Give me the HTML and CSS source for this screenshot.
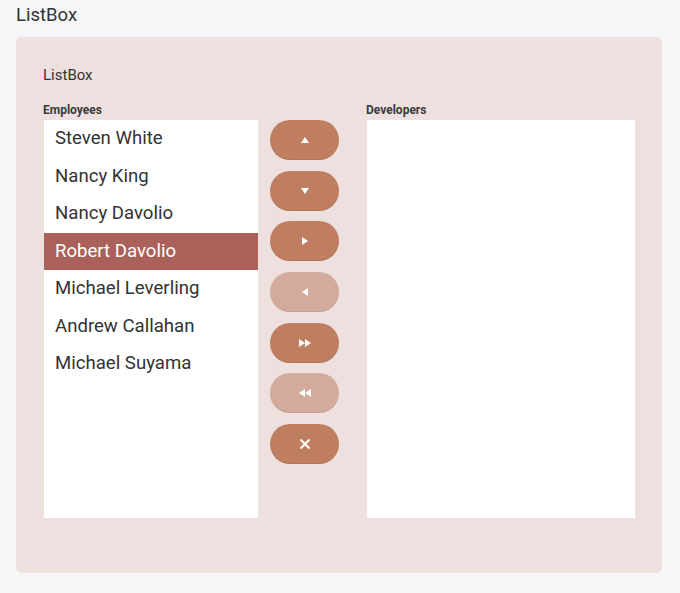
FILE: index.html
```html
<!DOCTYPE html>
<html lang="en">
  <head>
    <meta charset="UTF-8" />
    <title>ListBox</title>
    <link rel="stylesheet" href="styles.css">
  </head>
  <body>
    <h1 class="page-title">ListBox</h1>

    <section class="card">
      <h2 class="card-title">ListBox</h2>

      <div class="dual">
        <div class="list-col list-left">
          <div class="list-label">Employees</div>
          <ul class="listbox">
            <li>Steven White</li>
            <li>Nancy King</li>
            <li>Nancy Davolio</li>
            <li class="selected">Robert Davolio</li>
            <li>Michael Leverling</li>
            <li>Andrew Callahan</li>
            <li>Michael Suyama</li>
          </ul>
        </div>

        <div class="tools">
          <button class="tool-btn" title="Move up">
            <svg width="10" height="10" viewBox="0 0 10 10"><path d="M5 2 L9 8 L1 8 Z" fill="#fff"/></svg>
          </button>
          <button class="tool-btn" title="Move down">
            <svg width="10" height="10" viewBox="0 0 10 10"><path d="M1 2 L9 2 L5 8 Z" fill="#fff"/></svg>
          </button>
          <button class="tool-btn" title="Move to">
            <svg width="10" height="10" viewBox="0 0 10 10"><path d="M2 1 L8 5 L2 9 Z" fill="#fff"/></svg>
          </button>
          <button class="tool-btn disabled" title="Move from">
            <svg width="10" height="10" viewBox="0 0 10 10"><path d="M8 1 L2 5 L8 9 Z" fill="#fff"/></svg>
          </button>
          <button class="tool-btn" title="Move all to">
            <svg width="14" height="10" viewBox="0 0 14 10"><path d="M1 1 L7 5 L1 9 Z M7 1 L13 5 L7 9 Z" fill="#fff"/></svg>
          </button>
          <button class="tool-btn disabled" title="Move all from">
            <svg width="14" height="10" viewBox="0 0 14 10"><path d="M7 1 L1 5 L7 9 Z M13 1 L7 5 L13 9 Z" fill="#fff"/></svg>
          </button>
          <button class="tool-btn" title="Remove">
            <svg width="12" height="12" viewBox="0 0 12 12"><path d="M1.5 1.5 L10.5 10.5 M10.5 1.5 L1.5 10.5" stroke="#fff" stroke-width="2"/></svg>
          </button>
        </div>

        <div class="list-col list-right">
          <div class="list-label">Developers</div>
          <ul class="listbox"></ul>
        </div>
      </div>
    </section>
  </body>
</html>
```

FILE: styles.css
```css
body {
  font-family: Roboto, "Noto Sans", sans-serif;
  margin: 0;
  padding: 0 18px 20px 16px;
  background-color: #f6f6f6;
  color: #333;
}

.page-title {
  font-size: 18.5px;
  font-weight: 400;
  margin: 0;
  padding-top: 4px;
  line-height: 22px;
  height: 33px;
  color: #333;
}

.card {
  background-color: #ede0df;
  border-radius: 6px;
  padding: 28px 27px 55px 27px;
}

.card-title {
  font-size: 15px;
  font-weight: 400;
  margin: 0 0 19px 0;
  line-height: 20px;
  color: #333;
}

.dual {
  display: flex;
  align-items: flex-start;
}

.list-col {
  display: flex;
  flex-direction: column;
}

.list-left {
  width: 215px;
}

.list-right {
  width: 269px;
}

.list-label {
  font-size: 12px;
  font-weight: 700;
  line-height: 13px;
  margin-bottom: 3px;
  color: #3a3a3a;
}

.listbox {
  list-style: none;
  margin: 0 0 0 1px;
  padding: 0;
  height: 398px;
  background-color: #fff;
}

.listbox li {
  height: 37.5px;
  line-height: 36px;
  padding-left: 11px;
  font-size: 18.6px;
  color: #333;
}

.listbox li.selected {
  background-color: #a9615a;
  color: #fff;
}

.tools {
  display: flex;
  flex-direction: column;
  gap: 10.7px;
  margin: 16px 27px 0 12px;
}

.tool-btn {
  width: 69px;
  height: 40px;
  border: none;
  border-radius: 20px;
  background-color: #c07e61;
  box-shadow: inset 0 -1px 0 rgba(0, 0, 0, 0.08);
  display: flex;
  align-items: center;
  justify-content: center;
  padding: 0;
}

.tool-btn.disabled {
  background-color: #d3ab9c;
}
```
